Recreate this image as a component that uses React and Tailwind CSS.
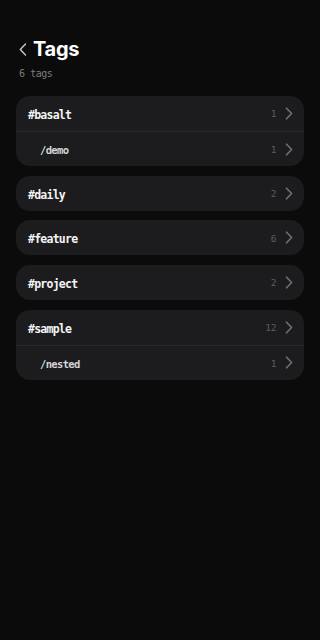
import { useState } from 'react';

const tags = [
  { name: '#basalt', count: 1, children: [{ name: '/demo', count: 1 }] },
  { name: '#daily', count: 2, children: [] },
  { name: '#feature', count: 6, children: [] },
  { name: '#project', count: 2, children: [] },
  { name: '#sample', count: 12, children: [{ name: '/nested', count: 1 }] },
];

const mono = { fontFamily: '"DejaVu Sans Mono", "Liberation Mono", monospace' };

function Chevron({ className }) {
  return (
    <svg width="8" height="13" viewBox="0 0 8 13" fill="none" className={className}>
      <path d="M1.5 1.2 L6.6 6.5 L1.5 11.8" stroke="currentColor" strokeWidth="1.6" strokeLinecap="round" strokeLinejoin="round" />
    </svg>
  );
}

function Row({ label, count, sub }) {
  return (
    <button
      className={`w-full flex items-center justify-between pr-[11px] text-left ${
        sub ? 'h-[35px] border-t border-[#29292b] pl-[24px]' : 'h-[35px] pl-[12px]'
      }`}
    >
      <span
        style={mono}
        className={
          sub
            ? 'pt-[4px] text-[10.5px] tracking-[-0.65px] font-semibold text-[#d4d4d6]'
            : 'pt-[4px] text-[11.5px] tracking-[-0.75px] font-bold text-[#f4f4f5]'
        }
      >
        {label}
      </span>
      <span className="flex items-center gap-[9px]">
        <span style={mono} className="pt-[2px] text-[9.5px] tracking-[-0.4px] text-[#5c5c60]">
          {count}
        </span>
        <Chevron className="text-[#707074]" />
      </span>
    </button>
  );
}

export default function App() {
  const [list] = useState(tags);

  return (
    <div className="min-h-screen w-full bg-[#0b0b0b] px-4 pt-[36px] pb-10" style={{ fontFamily: 'Inter, "Noto Sans", sans-serif' }}>
      {/* Header */}
      <div className="flex items-center gap-[6px] pl-[3px]">
        <svg width="8" height="13" viewBox="0 0 8 13" fill="none" className="text-[#c8c8cc]">
          <path d="M6.5 1 L1.3 6.5 L6.5 12" stroke="currentColor" strokeWidth="1.4" strokeLinecap="round" strokeLinejoin="round" />
        </svg>
        <h1 className="text-[20px] leading-[26px] font-bold tracking-[-0.3px] text-white">Tags</h1>
      </div>
      <p style={mono} className="mt-[4px] pl-[3px] text-[10px] tracking-[-0.45px] text-[#7c7c80]">
        6 tags
      </p>

      {/* Tag groups */}
      <div className="mt-[15px] flex flex-col gap-[9.7px]">
        {list.map((tag) => (
          <div key={tag.name} className="rounded-[14px] bg-[#1c1c1e] overflow-hidden">
            <Row label={tag.name} count={tag.count} />
            {tag.children.map((c) => (
              <Row key={c.name} label={c.name} count={c.count} sub />
            ))}
          </div>
        ))}
      </div>
    </div>
  );
}
